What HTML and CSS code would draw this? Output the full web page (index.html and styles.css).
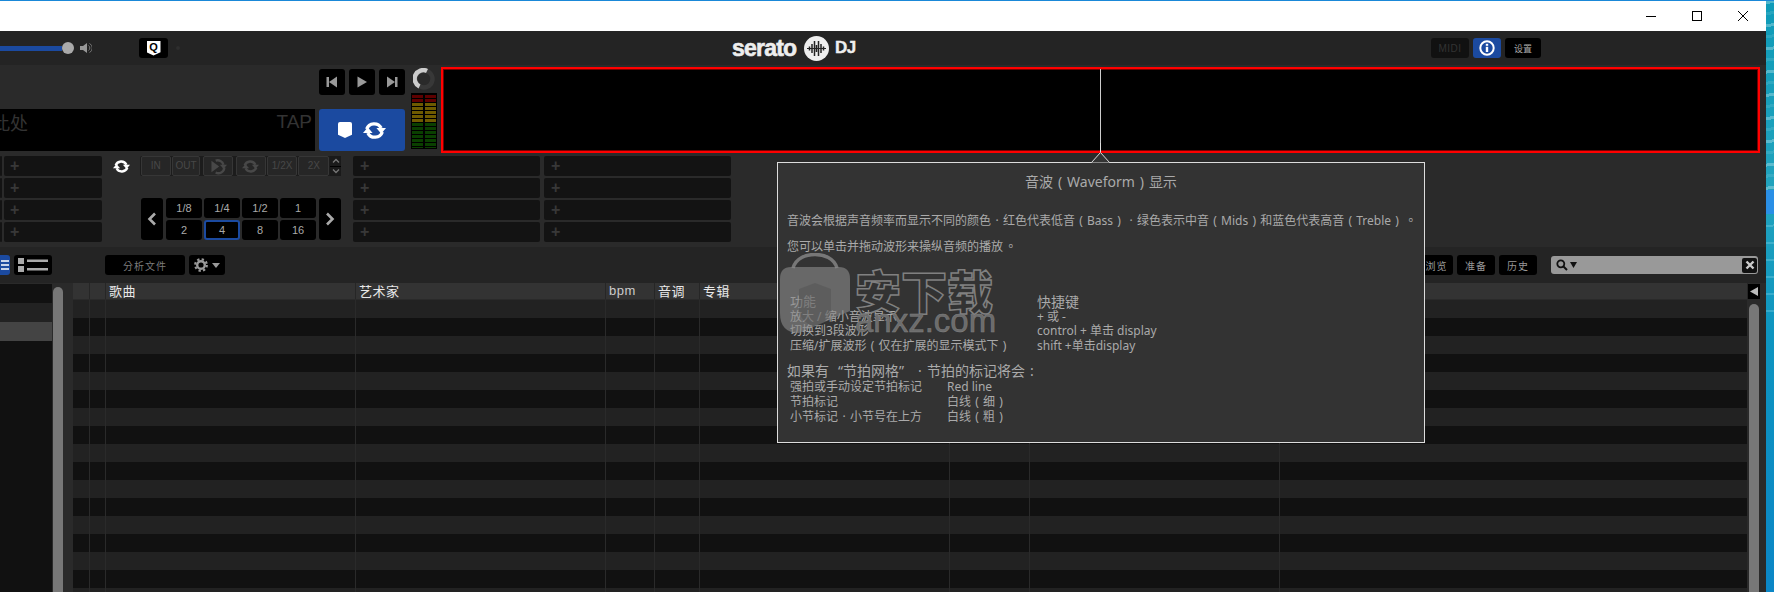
FILE: index.html
```html
<!DOCTYPE html>
<html lang="zh-Hant">
<head>
<meta charset="utf-8">
<title>Serato DJ</title>
<link rel="stylesheet" href="styles.css">
</head>
<body>
<svg class="defs" width="0" height="0" aria-hidden="true">
  <symbol id="sync" viewBox="0 0 24 24">
    <path d="M3.800 10.500A8.300 8.300 0 0 1 19 9.500" fill="none" stroke="currentColor" stroke-width="3.400"/>
    <polygon points="14,9.500 24,9.500 19,15.500" fill="currentColor"/>
    <path d="M20.200 13.500A8.300 8.300 0 0 1 5 14.500" fill="none" stroke="currentColor" stroke-width="3.400"/>
    <polygon points="10,14.500 0,14.500 5,8.500" fill="currentColor"/>
  </symbol>
</svg>
<div class="desktop">
  <div class="window">
    <header class="titlebar">
      <span class="winbtn"><svg width="12" height="12" viewBox="0 0 12 12"><path d="M1 6.500h10" stroke="#000" fill="none"/></svg></span>
      <span class="winbtn"><svg width="12" height="12" viewBox="0 0 12 12"><rect x="1.500" y="1.500" width="9" height="9" stroke="#000" fill="none"/></svg></span>
      <span class="winbtn"><svg width="12" height="12" viewBox="0 0 12 12"><path d="M1 1l10 10M11 1L1 11" stroke="#000" fill="none"/></svg></span>
    </header>

    <div class="topbar">
      <div class="volume">
        <div class="vol-track"></div>
        <div class="vol-knob"></div>
        <svg class="vol-icon" width="12" height="12" viewBox="0 0 12 12"><polygon points="0,4 3,4 7,1 7,11 3,8 0,8" fill="#999"/><path d="M8.500 3.500a3 3 0 0 1 0 5M9.500 1.500a5 5 0 0 1 0 9" stroke="#777" fill="none"/></svg>
      </div>
      <div class="tb-btn q-btn"><span class="q-badge">Q</span></div>
      <div class="q-dot"></div>
      <div class="logo">
        <span class="logo-word">serato</span>
        <svg class="logo-mark" width="25" height="25" viewBox="0 0 25 25"><circle cx="12.500" cy="12.500" r="12.500" fill="#eee"/><path d="M5.500 10.500v4M8 8v9M10.500 5v15M12.500 9v7M14.500 5v15M17 8v9M19.500 10.500v4" stroke="#222" stroke-width="1.500"/><path d="M3 12.500h19" stroke="#222" stroke-width="1"/></svg>
        <span class="logo-dj">DJ</span>
      </div>
      <div class="tb-right">
        <div class="tb-btn midi">MIDI</div>
        <div class="tb-btn info"><svg width="16" height="16" viewBox="0 0 16 16"><circle cx="8" cy="8" r="6.700" fill="none" stroke="#fff" stroke-width="2"/><rect x="6.800" y="6.800" width="2.400" height="5.200" fill="#fff"/><rect x="6.800" y="3.800" width="2.400" height="2" fill="#fff"/></svg></div>
        <div class="tb-btn setup">设置</div>
      </div>
    </div>

    <section class="deck">
      <div class="deck-top">
        <div class="deck-main">
          <div class="transport">
            <div class="tr-btn"><svg width="12" height="12" viewBox="0 0 12 12"><rect x="0.500" y="1" width="2.500" height="10" fill="#999"/><polygon points="11,0.500 11,11.500 3,6" fill="#999"/></svg></div>
            <div class="tr-btn"><svg width="12" height="12" viewBox="0 0 12 12"><polygon points="1.500,0.500 1.500,11.500 11,6" fill="#999"/></svg></div>
            <div class="tr-btn"><svg width="12" height="12" viewBox="0 0 12 12"><rect x="9" y="1" width="2.500" height="10" fill="#999"/><polygon points="1,0.500 1,11.500 9,6" fill="#999"/></svg></div>
          </div>
          <div class="tap-row">
            <div class="tap"><span class="tap-hint">此处</span><span class="tap-label">TAP</span></div>
            <div class="cue-loop">
              <span class="cue-shield"></span>
              <svg class="icon-sync-lg" width="23" height="23"><use href="#sync"/></svg>
            </div>
          </div>
        </div>
        <div class="level">
          <svg width="22" height="22" viewBox="0 0 22 22"><circle cx="11" cy="11" r="8.500" fill="none" stroke="#383838" stroke-width="4.500"/><path d="M6.500 18.500A8.500 8.500 0 0 1 14 3" fill="none" stroke="#ccc" stroke-width="4.500"/></svg>
          <div class="meter"><div class="meter-bar"></div><div class="meter-bar"></div></div>
        </div>
        <div class="wave"><div class="wave-line"></div></div>
      </div>

      <div class="deck-bottom">
        <div class="pad-col stub"><div class="pad"></div><div class="pad"></div><div class="pad"></div><div class="pad"></div></div>
        <div class="pad-col first"><div class="pad">+</div><div class="pad">+</div><div class="pad">+</div><div class="pad">+</div></div>
        <div class="sync-slot"><svg width="17" height="17"><use href="#sync"/></svg></div>
        <div class="loop-col">
          <div class="loop-box">
            <div class="lp lp-in">IN</div>
            <div class="lp lp-out">OUT</div>
            <div class="lp lp-icon"><svg width="17" height="17" viewBox="0 0 24 24"><path d="M8 3.800A8.300 8.300 0 0 1 19 9.500M20.200 13.500A8.300 8.300 0 0 1 8 20.500" fill="none" stroke="currentColor" stroke-width="3.400"/><polygon points="14,9.500 24,9.500 19,15.500" fill="currentColor"/><polygon points="2,4 2,20 13,12" fill="currentColor"/></svg></div>
            <div class="lp lp-icon"><svg width="17" height="17"><use href="#sync"/></svg></div>
            <div class="lp lp-half">1/2X</div>
            <div class="lp lp-half">2X</div>
            <div class="lp-arrows">
              <div class="lp-ud"><svg width="8" height="6" viewBox="0 0 8 6"><path d="M1 4.500l3-3 3 3" fill="none" stroke="#777" stroke-width="1.300"/></svg></div>
              <div class="lp-ud"><svg width="8" height="6" viewBox="0 0 8 6"><path d="M1 1.500l3 3 3-3" fill="none" stroke="#777" stroke-width="1.300"/></svg></div>
            </div>
          </div>
          <div class="beat-row">
            <div class="beat-arrow"><svg width="10" height="14" viewBox="0 0 10 14"><path d="M8 1.500L2.500 7 8 12.500" fill="none" stroke="#aaa" stroke-width="2.600"/></svg></div>
            <div class="beat-grid">
              <div class="beat">1/8</div><div class="beat">1/4</div><div class="beat">1/2</div><div class="beat">1</div>
              <div class="beat">2</div><div class="beat active">4</div><div class="beat">8</div><div class="beat">16</div>
            </div>
            <div class="beat-arrow"><svg width="10" height="14" viewBox="0 0 10 14"><path d="M2 1.500L7.500 7 2 12.500" fill="none" stroke="#aaa" stroke-width="2.600"/></svg></div>
          </div>
        </div>
        <div class="pad-col wide mid"><div class="pad">+</div><div class="pad">+</div><div class="pad">+</div><div class="pad">+</div></div>
        <div class="pad-col wide"><div class="pad">+</div><div class="pad">+</div><div class="pad">+</div><div class="pad">+</div></div>
      </div>
    </section>

    <div class="libbar">
      <div class="lb-btn view-a"><svg width="8" height="10" viewBox="0 0 8 10"><path d="M0 1h8M0 5h8M0 9h8" stroke="#fff" stroke-width="1.500"/></svg></div>
      <div class="lb-btn view-b"><svg width="30" height="16" viewBox="0 0 30 16"><rect x="0" y="1" width="6" height="6" fill="#aaa"/><rect x="0" y="9" width="6" height="6" fill="#aaa"/><rect x="9" y="2.500" width="21" height="2.500" fill="#aaa"/><rect x="9" y="11" width="21" height="2.500" fill="#aaa"/></svg></div>
      <div class="lb-btn analyze">分析文件</div>
      <div class="lb-btn gear">
        <svg width="14" height="14" viewBox="0 0 14 14"><circle cx="7" cy="7" r="3.800" fill="none" stroke="#999" stroke-width="2.400"/><circle cx="7" cy="7" r="5.800" fill="none" stroke="#999" stroke-width="2.200" stroke-dasharray="2.300 2.250"/></svg>
        <svg width="8" height="5" viewBox="0 0 8 5"><polygon points="0,0 8,0 4,5" fill="#999"/></svg>
      </div>
      <div class="lb-right">
        <div class="lb-btn tab tab-a">浏览</div>
        <div class="lb-btn tab">准备</div>
        <div class="lb-btn tab">历史</div>
        <div class="search">
          <svg width="12" height="12" viewBox="0 0 12 12"><circle cx="4.800" cy="4.800" r="3.500" fill="none" stroke="#111" stroke-width="1.800"/><path d="M7.500 7.500L11 11" stroke="#111" stroke-width="2"/></svg>
          <svg width="7" height="6" viewBox="0 0 7 6"><polygon points="0,0 7,0 3.500,6" fill="#111"/></svg>
          <div class="search-x"><svg width="10" height="10" viewBox="0 0 10 10"><path d="M1.500 1.500l7 7M8.500 1.500l-7 7" stroke="#ccc" stroke-width="2.400"/></svg></div>
        </div>
      </div>
    </div>

    <section class="library">
      <aside class="crates">
        <div class="crate"></div>
        <div class="crate alt"></div>
        <div class="crate sel"></div>
      </aside>
      <div class="vscroll left"><div class="thumb"></div></div>
      <div class="tracks">
        <div class="thead">
          <div class="th"></div><div class="th"></div>
          <div class="th">歌曲</div><div class="th">艺术家</div>
          <div class="th th-latin">bpm</div><div class="th">音调</div><div class="th">专辑</div>
          <div class="th"></div><div class="th"></div><div class="th"></div>
        </div>
        <div class="tbody">
          <div class="tc"></div><div class="tc"></div><div class="tc"></div><div class="tc"></div><div class="tc"></div>
          <div class="tc"></div><div class="tc"></div><div class="tc"></div><div class="tc"></div><div class="tc"></div>
        </div>
      </div>
      <div class="vscroll right">
        <div class="col-toggle"><svg width="8" height="9" viewBox="0 0 8 9"><polygon points="8,0 8,9 0,4.500" fill="#bbb"/></svg></div>
        <div class="thumb"></div>
      </div>
    </section>

    <div class="popup">
      <svg class="popup-tip" width="19" height="20" viewBox="0 0 19 20"><path d="M0.500 19.500L9.500 9.500 18.500 19.500" fill="#333" stroke="#ddd"/><path d="M9.500 0v9" stroke="#ddd"/></svg>
      <h2 class="pop-title">音波<span class="fw">(</span>Waveform<span class="fw">)</span>显示</h2>
      <p class="pop-para">音波会根据声音频率而显示不同的颜色<span class="fw">·</span>红色代表低音<span class="fw">(</span>Bass<span class="fw">)</span><span class="fw">·</span>绿色表示中音<span class="fw">(</span>Mids<span class="fw">)</span>和蓝色代表高音<span class="fw">(</span>Treble<span class="fw">)</span><span class="fw stop">。</span></p>
      <p class="pop-para second">您可以单击并拖动波形来操纵音频的播放<span class="fw stop">。</span></p>
      <div class="keys">
        <div class="keys-h">功能</div><div class="keys-h big">快捷键</div>
        <div>放大 / 缩小音波显示</div><div>+ 或 -</div>
        <div>切换到3段波形</div><div>control + 单击 display</div>
        <div>压缩/扩展波形<span class="fw">(</span>仅在扩展的显示模式下<span class="fw">)</span></div><div>shift +单击display</div>
      </div>
      <h3 class="grid-h">如果有<span class="fw end">“</span>节拍网格<span class="fw start">”</span><span class="fw">·</span>节拍的标记将会<span class="fw">:</span></h3>
      <div class="marks">
        <div>强拍或手动设定节拍标记</div><div>Red line</div>
        <div>节拍标记</div><div>白线<span class="fw">(</span>细<span class="fw">)</span></div>
        <div>小节标记<span class="fw">·</span>小节号在上方</div><div>白线<span class="fw">(</span>粗<span class="fw">)</span></div>
      </div>
    </div>

    <div class="watermark" aria-hidden="true">
      <svg class="wm-bag" width="72" height="82" viewBox="0 0 72 82">
        <path d="M14 15C17 5 27 1.500 36 1.500S55 5 58 15" fill="none" stroke="#777" stroke-width="3.500"/>
        <path d="M12 14H60Q71 14 71 26V58L20 80Q1 80 1 60V26Q1 14 12 14Z" fill="#8c8c8c" fill-opacity=".6"/>
        <path d="M20 36L36 30 52 36V56Q52 68 36 74 20 68 20 56Z" fill="#444" fill-opacity=".3"/>
      </svg>
      <div class="wm-text">
        <div class="wm-cn">安下载</div>
        <div class="wm-en">anxz.com</div>
      </div>
    </div>
  </div>
  <div class="wallpaper"><div class="wall-tab"></div></div>
</div>
</body>
</html>
```

FILE: styles.css
```css
* { box-sizing: border-box; }
html, body { margin: 0; padding: 0; }
body {
  width: 1774px;
  height: 592px;
  overflow: hidden;
  background: #0e86c8;
  font-family: "Noto Sans", "Noto Sans CJK TC", sans-serif;
  color: #aaa;
}
.defs { position: absolute; }
.desktop { display: flex; width: 1774px; height: 592px; }
.window {
  position: relative;
  width: 1766px;
  height: 592px;
  display: flex;
  flex-direction: column;
  overflow: hidden;
  background: #242424;
}
.wallpaper {
  width: 8px;
  height: 592px;
  padding-top: 189px;
  border-top: 1px solid #1a88d8;
  background:
    repeating-linear-gradient(172deg, rgba(255,255,255,.28) 0 3px, transparent 3px 11px, rgba(255,255,255,.1) 11px 14px, transparent 14px 23px) 0 0 / 100% 190px no-repeat,
    repeating-linear-gradient(175deg, rgba(190,240,250,.22) 0 2px, transparent 2px 17px) 0 190px / 100% 130px no-repeat,
    linear-gradient(#0f9bb8 0, #22a3bd 190px, #0e95c0 330px, #0b86c6 592px);
}
.wall-tab { width: 8px; height: 24px; background: #2a8fe6; }

/* title bar */
.titlebar {
  height: 31px;
  flex: none;
  display: flex;
  justify-content: flex-end;
  background: #fff;
  border-top: 1px solid #1a88d8;
}
.winbtn { width: 46px; height: 30px; display: flex; align-items: center; justify-content: center; }

/* top bar */
.topbar {
  height: 34px;
  flex: none;
  display: flex;
  align-items: center;
  background: #242424;
  padding-right: 225px;
}
.volume { width: 92px; flex: none; display: flex; align-items: center; }
.vol-track { width: 62px; height: 5px; background: #1b4aa0; }
.vol-knob { width: 12px; height: 12px; border-radius: 50%; background: #aaa; flex: none; }
.vol-icon { margin-left: 6px; flex: none; }
.tb-btn {
  height: 20px;
  border-radius: 3px;
  display: flex;
  align-items: center;
  justify-content: center;
  background: #000;
}
.q-btn { width: 29px; margin-left: 47px; }
.q-badge {
  width: 14px;
  height: 15px;
  background: #fff;
  color: #000;
  font: bold 11px/13px "Liberation Sans", sans-serif;
  text-align: center;
  clip-path: polygon(0 0, 100% 0, 100% 78%, 50% 100%, 0 78%);
}
.q-dot { width: 4px; height: 4px; border-radius: 50%; background: #2e2e2e; margin-left: 8px; }
.logo { display: flex; align-items: center; margin-left: 552px; color: #eee; }
.logo-word { font: bold 23px/24px "Liberation Sans", sans-serif; letter-spacing: -.8px; -webkit-text-stroke: .6px #eee; width: 72px; }
.logo-mark { flex: none; }
.logo-dj { font: bold 17px/20px "Liberation Sans", sans-serif; margin-left: 6px; letter-spacing: -.5px; -webkit-text-stroke: .4px #eee; }
.tb-right { margin-left: auto; display: flex; gap: 4px; }
.midi { width: 38px; background: #111; color: #333; font: 10px "Liberation Sans", sans-serif; letter-spacing: .5px; }
.info { width: 28px; background: #1b4aa0; }
.setup { width: 36px; font-size: 9px; color: #aaa; }

/* deck */
.deck { height: 182px; flex: none; display: flex; flex-direction: column; background: #2a2a2a; }
.deck-top { height: 91px; flex: none; display: flex; }
.deck-main { width: 405px; flex: none; display: flex; flex-direction: column; padding-top: 4px; }
.transport { height: 26px; display: flex; justify-content: flex-end; gap: 4px; }
.tr-btn { width: 26px; height: 26px; border-radius: 3px; background: #000; display: flex; align-items: center; justify-content: center; }
.tap-row { height: 42px; margin-top: 14px; display: flex; gap: 4px; }
.tap {
  width: 315px;
  background: #000;
  display: flex;
  justify-content: space-between;
  padding: 0 3px 0 0;
  font: 18px/28px "Noto Sans", "Noto Sans CJK TC", sans-serif;
  color: #333;
}
.tap-hint { margin-left: -8px; font-size: 18px; }
.tap-label { font-family: "Liberation Sans", sans-serif; font-size: 19px; line-height: 26px; }
.cue-loop {
  width: 86px;
  border-radius: 3px;
  background: #1b4aa0;
  display: flex;
  align-items: center;
  justify-content: center;
  gap: 11px;
  color: #fff;
}
.cue-shield {
  width: 14px;
  height: 16px;
  background: #fff;
  border-radius: 2px 2px 0 0;
  clip-path: polygon(0 0, 100% 0, 100% 80%, 50% 100%, 0 80%);
}
.icon-sync-lg { flex: none; }
.level { width: 26px; margin-left: 6px; flex: none; display: flex; flex-direction: column; align-items: center; padding-top: 3px; }
.meter {
  width: 26px;
  height: 56px;
  margin-top: 3px;
  background: #000;
  display: flex;
  justify-content: center;
  gap: 2px;
  padding: 1px 0;
}
.meter-bar {
  width: 11px;
  background:
    repeating-linear-gradient(#000 0 1px, transparent 1px 4px),
    linear-gradient(#5e0000 0 8px, #6e5a00 8px 28px, #0a3f00 28px);
}
.wave {
  width: 1319px;
  height: 86px;
  margin: 2px 0 0 4px;
  border: 2px solid #f00;
  box-shadow: inset 0 0 0 1px rgba(255, 0, 0, .45);
  background: #000;
  display: flex;
  justify-content: center;
}
.wave-line { width: 1px; background: #ccc; }

.deck-bottom { flex: 1; display: flex; }
.pad-col { display: flex; flex-direction: column; gap: 2px; width: 98px; flex: none; }
.pad {
  height: 20px;
  background: #131313;
  border-radius: 2px;
  padding-left: 6px;
  color: #383838;
  font: bold 16px/19px "Liberation Sans", sans-serif;
}
.stub { width: 2px; }
.stub .pad { padding: 0; }
.first { margin-left: 2px; }
.sync-slot { width: 38px; flex: none; height: 20px; display: flex; align-items: center; justify-content: center; color: #fff; }
.loop-col { width: 201px; flex: none; }
.loop-box {
  height: 20px;
  display: flex;
  background: #1c1c1c;
  border-radius: 2px;
  gap: 1px;
  padding-left: 1px;
}
.lp {
  height: 20px;
  border: 1px solid #363636;
  border-radius: 2px;
  background: #262626;
  color: #484848;
  font: 10px/18px "Liberation Sans", sans-serif;
  text-align: center;
  display: flex;
  align-items: center;
  justify-content: center;
}
.lp-in { width: 30px; }
.lp-out { width: 29px; }
.lp-icon { width: 30px; margin-left: 2px; }
.lp-half { width: 31px; }
.lp-arrows { width: 11px; display: flex; flex-direction: column; gap: 1px; background: #000; }
.lp-ud { flex: 1; display: flex; align-items: center; justify-content: center; background: #1a1a1a; }
.beat-row { display: flex; margin: 22px 0 0 1px; gap: 3px; }
.beat-arrow { width: 22px; height: 42px; background: #000; border-radius: 3px; display: flex; align-items: center; justify-content: center; }
.beat-grid { display: grid; grid-template-columns: repeat(4, 36px); grid-template-rows: repeat(2, 20px); gap: 2px; width: 150px; }
.beat { background: #000; border-radius: 3px; text-align: center; font: 11px/20px "Liberation Sans", sans-serif; color: #aaa; }
.beat.active { border: 2px solid #1b4aa0; line-height: 16px; }
.wide { width: 187px; }
.wide .pad { padding-left: 7px; }
.mid { margin-left: 12px; margin-right: 4px; }

/* library toolbar */
.libbar {
  height: 36px;
  flex: none;
  display: flex;
  align-items: center;
  background: #242424;
  padding-right: 8px;
}
.lb-btn { height: 20px; background: #000; border-radius: 3px; display: flex; align-items: center; justify-content: center; font-size: 10px; color: #999; }
.view-a { width: 10px; background: #1b4aa0; border-radius: 0 3px 3px 0; }
.view-b { width: 38px; margin-left: 4px; }
.analyze { width: 80px; margin-left: 53px; color: #7b7b7b; letter-spacing: 1px; }
.gear { width: 36px; margin-left: 4px; gap: 4px; }
.lb-right { margin-left: auto; display: flex; align-items: center; gap: 4px; }
.tab { width: 38px; letter-spacing: 1px; }
.tab-a { width: 33px; border-radius: 0 3px 3px 0; }
.search {
  width: 207px;
  height: 18px;
  margin-left: 10px;
  background: #999;
  border-radius: 3px;
  display: flex;
  align-items: center;
  gap: 2px;
  padding: 0 1px 0 5px;
}
.search-x { width: 15px; height: 15px; margin-left: auto; background: #111; border-radius: 2px; display: flex; align-items: center; justify-content: center; }

/* library */
.library { flex: 1; display: flex; min-height: 0; background: #2a2a2a; }
.crates { width: 52px; flex: none; margin-top: 1px; background: #111; }
.crate { height: 19px; background: #111; }
.crate.alt { background: #222; }
.crate.sel { background: #444; }
.vscroll { flex: none; display: flex; flex-direction: column; }
.vscroll.left { width: 21px; padding: 4px 10px 0 1px; }
.thumb { flex: 1; width: 10px; background: #777; border-radius: 5px 5px 0 0; }
.tracks { flex: 1; display: flex; flex-direction: column; min-width: 0; }
.thead, .tbody {
  display: grid;
  grid-template-columns: 17px 16px 250px 250px 49px 45px 250px 80px 250px 1fr;
}
.thead { height: 17px; flex: none; background: #333; border-bottom: 1px solid #2a2a2a; }
.th {
  border-right: 1px solid #262626;
  padding-left: 3px;
  color: #e8e8e8;
  font: 13px/15px "Noto Sans CJK SC", sans-serif;
  letter-spacing: .5px;
}
.th-latin { font-family: "Liberation Sans", sans-serif; color: #ccc; font-size: 13px; }
.tbody { flex: 1; background: repeating-linear-gradient(#222 0 18px, #111 18px 36px); }
.tc { border-right: 1px solid #2a2a2a; }
.vscroll.right { width: 18px; padding-right: 6px; }
.col-toggle { height: 15px; margin-top: 1px; background: #000; display: flex; align-items: center; justify-content: center; }
.vscroll.right .thumb { margin: 5px 0 0 1px; }

/* help popup */
.popup {
  position: absolute;
  left: 777px;
  top: 162px;
  width: 648px;
  height: 281px;
  padding: 9px 9px 0;
  background: #333;
  border: 1px solid #ddd;
  color: #aaa;
  font-size: 12px;
}
.popup-tip { position: absolute; left: 313px; top: -20px; }
.fw { display: inline-block; width: 1em; text-align: center; }
.fw.end { text-align: right; }
.fw.start { text-align: left; }
.fw.stop { transform: translate(.15em, 0); }
.pop-title { margin: 0; text-align: center; font-size: 14px; font-weight: 400; line-height: 20px; }
.pop-para { margin: 21px 0 0; line-height: 16px; white-space: nowrap; }
.pop-para.second { margin-top: 10px; }
.keys {
  margin: 39px 0 0 3px;
  display: grid;
  grid-template-columns: 247px 1fr;
  grid-auto-rows: 14.700px;
  line-height: 15px;
  white-space: nowrap;
}
.keys-h { font-size: 13px; }
.keys-h.big { font-size: 14px; }
.grid-h { margin: 10px 0 0; font-size: 14px; font-weight: 400; line-height: 16px; white-space: nowrap; }
.marks {
  margin: 0 0 0 3px;
  display: grid;
  grid-template-columns: 157px 1fr;
  grid-auto-rows: 15px;
  line-height: 15px;
  white-space: nowrap;
}

/* watermark over the popup */
.watermark { position: absolute; left: 779px; top: 253px; display: flex; pointer-events: none; }
.wm-bag { flex: none; }
.wm-text { margin-left: 4px; padding-top: 12px; width: 140px; }
.wm-cn {
  font: 900 46px/48px "Noto Sans CJK SC", sans-serif;
  color: transparent;
  -webkit-text-stroke: 1.500px #808080;
  white-space: nowrap;
}
.wm-en {
  margin-top: -4px;
  font: 33px/24px "Liberation Sans", sans-serif;
  color: #6c6c6c;
  -webkit-text-stroke: .5px #808080;
  white-space: nowrap;
}
```
